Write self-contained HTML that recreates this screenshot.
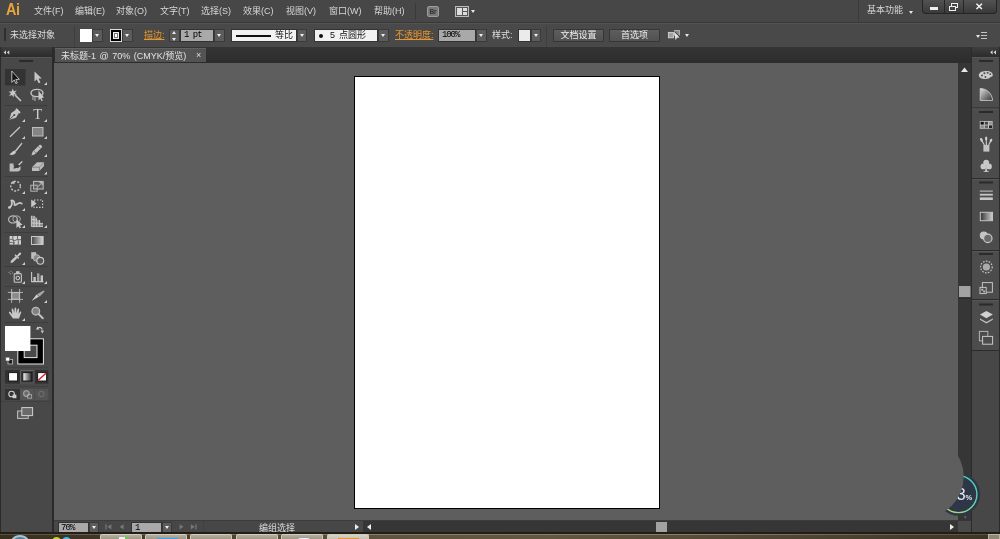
<!DOCTYPE html>
<html>
<head>
<meta charset="utf-8">
<title>Ai</title>
<style>
*{margin:0;padding:0;box-sizing:border-box}
html,body{width:1000px;height:539px;overflow:hidden;background:#5e5e5e}
body{position:relative;font-family:"Liberation Sans","Noto Sans CJK SC",sans-serif;font-size:9px;color:#e0e0e0}
.abs{position:absolute}
#menubar{left:0;top:0;width:1000px;height:23px;background:#474747;border-bottom:1px solid #383838}
#ctrlbar{left:0;top:23px;width:1000px;height:24px;background:#494949;border-top:1px solid #535353}
#tabbar{left:0;top:47px;width:1000px;height:16px;background:linear-gradient(#343434,#2c2c2c)}
#canvas{left:52px;top:63px;width:906px;height:456px;background:#5e5e5e}
#artboard{left:354px;top:76px;width:306px;height:433px;background:#fff;border:1px solid #000}
#lefttool{left:0;top:48px;width:51px;height:471px;background:#474747}
#leftsep{left:51px;top:48px;width:2px;height:471px;background:#2e2e2e}
#vscroll{left:958px;top:63px;width:13px;height:456px;background:#383838}
#rightpanel{left:972px;top:48px;width:28px;height:484px;background:#494949}
.mi{top:5px;height:12px;line-height:12px;white-space:nowrap;color:#d6d6d6;font-size:9px}

#ailogo{left:6px;top:0px;font-size:16px;font-weight:bold;color:#e9a43a;line-height:20px;letter-spacing:-0.5px;transform:scaleX(0.9);transform-origin:0 0}
#bricon{left:427px;top:6px;width:12px;height:11px;background:#7a7a7a;border:1px solid #9c9c9c;border-radius:2px;color:#303030;font-size:6.5px;font-weight:bold;line-height:9px;text-align:center}
#layicon{left:455px;top:6px;width:14px;height:11px;border:1px solid #bbb;background:#555}
#layicon i{position:absolute;left:1px;top:1px;width:5px;height:7px;background:#ddd}
#layicon b{position:absolute;left:7px;top:1px;width:4px;height:3px;background:#ddd}
#layicon u{position:absolute;left:7px;top:5px;width:4px;height:3px;background:#ddd}
.tri{width:0;height:0;border-left:3px solid transparent;border-right:3px solid transparent;border-top:4px solid #e6e6e6}
.tri.s{border-left-width:2px;border-right-width:2px;border-top-width:3px}
.triu{position:absolute;width:0;height:0;border-left:2.5px solid transparent;border-right:2.5px solid transparent;border-bottom:3px solid #e6e6e6}
#winbtns{left:922px;top:0;width:75px;height:14px;background:linear-gradient(#525252,#3a3a3a);border:1px solid #242424;border-top:none;border-radius:0 0 4px 4px}
.wb{position:absolute;top:0;height:14px;background:linear-gradient(#4a4a4a,#333);border:1px solid #222;border-top:none;border-radius:0 0 3px 3px}
.ct{top:5px;line-height:13px;font-size:9px;white-space:nowrap;color:#dedede}
.or{color:#e8962e;text-decoration:underline}
.dd{background:#5c5c5c;border:1px solid #3a3a3a}
.dd:after{content:"";position:absolute;left:50%;top:4px;margin-left:-2.5px;width:0;height:0;border-left:2.5px solid transparent;border-right:2.5px solid transparent;border-top:3px solid #eee}
.inp{background:#a9a9a9;border:1px solid #333;color:#000;font-size:9px;line-height:11px}
.btn{background:linear-gradient(#5e5e5e,#515151);border:1px solid #363636;color:#eee;font-size:9px;line-height:11px;text-align:center;border-radius:1px}
#arricon{left:668px;top:5px;width:14px;height:12px}
#ctrlmenu{left:976px;top:8px;width:12px;height:8px}
#ctrlmenu i{position:absolute;left:5px;width:6px;height:1px;background:#c4c4c4}
#tab{left:55px;top:1px;width:151px;height:14px;background:#535353;color:#e2e2e2;font-size:9px;border-top:1px solid #616161}

#bottombar{left:54px;top:521px;width:904px;height:12px;background:#474747;box-shadow:0 -1px 0 #3c3c3c}
#taskbar{left:0;top:532px;width:1000px;height:7px;background:linear-gradient(90deg,#38301f 0%,#3d3528 9%,#5f543f 38%,#62573f 55%,#4e4535 80%,#3a3428 100%);border-top:2px solid #221e16;overflow:hidden}
.dd.sm:after{top:3px}
.tb{top:0px;width:42px;height:8px;background:linear-gradient(#b3ae9f,#8c8676);border:1px solid #d0cbbb;border-bottom:none;border-radius:2px 2px 0 0}
.tb.act{background:linear-gradient(#d6d2c6,#b9b4a4)}
.tb i{position:absolute;top:2px;height:6px}
#root{position:absolute;left:0;top:0;width:1000px;height:539px;overflow:hidden;will-change:transform}
</style>
</head>
<body>
<div id="root">
<div id="canvas" class="abs"></div>
<div id="artboard" class="abs"></div>

<!-- MENU BAR -->
<div id="menubar" class="abs">
  <div class="abs" id="ailogo">Ai</div>
  <div class="abs mi" style="left:34px">文件(F)</div>
  <div class="abs mi" style="left:75px">编辑(E)</div>
  <div class="abs mi" style="left:116px">对象(O)</div>
  <div class="abs mi" style="left:160px">文字(T)</div>
  <div class="abs mi" style="left:201px">选择(S)</div>
  <div class="abs mi" style="left:243px">效果(C)</div>
  <div class="abs mi" style="left:286px">视图(V)</div>
  <div class="abs mi" style="left:329px">窗口(W)</div>
  <div class="abs mi" style="left:374px">帮助(H)</div>
  <div class="abs" style="left:415px;top:3px;width:1px;height:17px;background:#3a3a3a"></div>
  <div class="abs" id="bricon">Br</div>
  <div class="abs" id="layicon"><i></i><b></b><u></u></div>
  <div class="abs tri" style="left:470.5px;top:9.5px;border-left-width:2.5px;border-right-width:2.5px;border-top-width:3px"></div>
  <div class="abs" style="left:858px;top:0;width:1px;height:22px;background:#3c3c3c"></div>
  <div class="abs mi" style="left:867px;top:4px">基本功能</div>
  <div class="abs tri s" style="left:909px;top:11px"></div>
  <div class="abs" id="winbtns">
    <em class="abs" style="left:21px;top:0;width:1px;height:13px;background:#262626"></em>
    <em class="abs" style="left:40px;top:0;width:1px;height:13px;background:#262626"></em>
    <em class="abs" style="left:7px;top:7px;width:8px;height:2.5px;background:#efefef"></em>
    <em class="abs" style="left:28px;top:3px;width:7px;height:5px;border:1.3px solid #efefef"></em>
    <em class="abs" style="left:25.5px;top:5.5px;width:7px;height:5px;border:1.3px solid #efefef;background:#454545"></em>
    <em class="abs" style="left:52px;top:0px;font-style:normal;font-size:10px;font-weight:bold;color:#efefef;line-height:13px">✕</em>
  </div>
</div>

<!-- CONTROL BAR -->
<div id="ctrlbar" class="abs">
  <div class="abs" style="left:4px;top:4px;width:2px;height:13px;background:#2f2f2f"></div>
  <div class="abs ct" style="left:10px">未选择对象</div>
  <div class="abs" style="left:74px;top:2px;width:1px;height:21px;background:#3e3e3e"></div>
  <div class="abs" style="left:80px;top:5px;width:12px;height:13px;background:#fff"></div>
  <div class="abs dd" style="left:92px;top:5px;width:11px;height:13px"></div>
  <div class="abs" style="left:110px;top:5px;width:12px;height:13px;background:#000;border:1px solid #ddd"><div class="abs" style="left:2px;top:2px;width:6px;height:7px;border:1px solid #eee;background:#777"><div class="abs" style="left:1px;top:1px;width:2px;height:3px;background:#fff"></div></div></div>
  <div class="abs dd" style="left:122px;top:5px;width:11px;height:13px"></div>
  <div class="abs ct or" style="left:144px">描边:</div>
  <div class="abs" style="left:169px;top:5px;width:11px;height:13px;background:#5a5a5a;border:1px solid #3a3a3a"><div class="abs triu" style="left:2px;top:1px"></div><div class="abs tri" style="left:2px;top:8px;border-left-width:2.5px;border-right-width:2.5px;border-top-width:3px"></div></div>
  <div class="abs inp" style="left:180px;top:5px;width:34px;height:13px;font-family:'Liberation Mono',monospace;font-size:9px;letter-spacing:-1px;padding-left:3px;padding-top:0px">1 pt</div>
  <div class="abs dd" style="left:214px;top:5px;width:11px;height:13px"></div>
  <div class="abs" style="left:231px;top:5px;width:66px;height:13px;background:#f2f2f2;border:1px solid #333"><div class="abs" style="left:4px;top:5px;width:35px;height:1.5px;background:#111"></div><div class="abs" style="left:43px;top:0;color:#111;line-height:11px;font-size:9px;white-space:nowrap">等比</div></div>
  <div class="abs dd" style="left:297px;top:5px;width:10px;height:13px"></div>
  <div class="abs" style="left:314px;top:5px;width:64px;height:13px;background:#f2f2f2;border:1px solid #333"><div class="abs" style="left:4px;top:4px;width:4px;height:4px;border-radius:2px;background:#111"></div><div class="abs" style="left:15px;top:0;color:#111;line-height:11px;font-size:9px;white-space:nowrap;word-spacing:1.5px">5 点圆形</div></div>
  <div class="abs dd" style="left:378px;top:5px;width:11px;height:13px"></div>
  <div class="abs ct or" style="left:395px">不透明度:</div>
  <div class="abs inp" style="left:438px;top:5px;width:38px;height:13px;padding-left:3px;font-family:'Liberation Mono',monospace;font-size:9px;letter-spacing:-1.1px;padding-top:0px">100%</div>
  <div class="abs dd" style="left:476px;top:5px;width:11px;height:13px"></div>
  <div class="abs ct" style="left:492px">样式:</div>
  <div class="abs" style="left:518px;top:5px;width:13px;height:13px;background:#ebebeb;border:1px solid #333"></div>
  <div class="abs dd" style="left:531px;top:5px;width:10px;height:13px"></div>
  <div class="abs" style="left:546px;top:2px;width:1px;height:21px;background:#3e3e3e"></div>
  <div class="abs btn" style="left:553px;top:5px;width:51px;height:13px">文档设置</div>
  <div class="abs btn" style="left:609px;top:5px;width:51px;height:13px">首选项</div>
  <svg class="abs" style="left:666px;top:4px" width="18" height="15" viewBox="666 28 18 15"><rect x="668.4" y="32.4" width="5" height="5.4" fill="#a0a0a0" stroke="#d4d4d4" stroke-width="0.9"/><rect x="674.6" y="30.4" width="5" height="4.8" fill="#8a8a8a" stroke="#bdbdbd" stroke-width="0.8"/><path d="M674.2,32 L679.6,37.6 L677,37.8 L675.6,40.2 Z" fill="#e2e2e2"/><path d="M674.6,31.4 L680,37" stroke="#2e2e2e" stroke-width="0.8"/></svg>
  <div class="abs tri" style="left:685px;top:10px;border-left-width:2.5px;border-right-width:2.5px;border-top-width:3.5px"></div>
  <div class="abs" id="ctrlmenu"><div class="abs tri s" style="left:0;top:3px"></div><i style="top:0"></i><i style="top:3px"></i><i style="top:6px"></i></div>
</div>

<!-- TAB BAR -->
<div id="tabbar" class="abs">
  <div class="abs" id="tab"><span class="abs" style="left:6px;top:1px;line-height:12px;white-space:nowrap;word-spacing:1px">未标题-1 @ 70% (CMYK/预览)</span><span class="abs" style="left:141px;top:0px;line-height:13px;font-size:9px;color:#ddd">×</span></div>
</div>

<!-- LEFT TOOLBAR -->
<svg class="abs" style="left:0;top:0" width="54" height="539" viewBox="0 0 54 539">
<defs>
<linearGradient id="hdr" x1="0" y1="0" x2="0" y2="1"><stop offset="0" stop-color="#3e3e3e"/><stop offset="1" stop-color="#2c2c2c"/></linearGradient>
<linearGradient id="g1" x1="0" y1="0" x2="1" y2="0"><stop offset="0" stop-color="#444"/><stop offset="1" stop-color="#d8d8d8"/></linearGradient>
<linearGradient id="g2" x1="0" y1="0" x2="1" y2="0"><stop offset="0" stop-color="#fff"/><stop offset="1" stop-color="#222"/></linearGradient>
</defs>
<!-- panel bg -->
<rect x="0" y="47" width="54" height="485" fill="#2b2b2b"/>
<rect x="1" y="47" width="51" height="10" fill="url(#hdr)"/>
<rect x="1" y="57" width="51" height="475" fill="#484848"/>
<rect x="1" y="57" width="51" height="1" fill="#565656"/>
<!-- collapse arrows -->
<path d="M6,50.2 L6,54.6 L3.6,52.4 Z M9.3,50.2 L9.3,54.6 L6.9,52.4 Z" fill="#d0d0d0"/>
<!-- grip -->
<rect x="19" y="60" width="14" height="2" fill="#2a2a2a"/>
<!-- separators -->
<g fill="#3d3d3d">
<rect x="4" y="105" width="44" height="1"/>
<rect x="4" y="176" width="44" height="1"/>
<rect x="4" y="232" width="44" height="1"/>
<rect x="4" y="266" width="44" height="1"/>
<rect x="4" y="286" width="44" height="1"/>
<rect x="4" y="322" width="44" height="1"/>
<rect x="4" y="367" width="44" height="1" fill="#414141"/>
<rect x="4" y="386" width="44" height="1" fill="#414141"/>
<rect x="1" y="401" width="50" height="1" fill="#404040"/>
</g>
<!-- row1 -->
<rect x="5" y="69" width="20.5" height="16.5" fill="#333"/>
<path d="M11.8,71 L11.8,82.3 L14.3,80 L15.8,83.6 L17.3,83 L15.8,79.5 L19.3,79.3 Z" fill="#151515" stroke="#c9c9c9" stroke-width="0.9" stroke-linejoin="round"/>
<path d="M34.5,71.5 L34.5,81.5 L36.8,79.3 L38.6,83.2 L40.4,82.4 L38.6,78.6 L41.8,78.4 Z" fill="#c6c6c6"/>
<path d="M47,82 L47,85 L44,85 Z" fill="#cfcfcf"/>
<!-- row2 wand -->
<path d="M12.8,88.5 L13.8,91.3 L16.8,90.5 L14.8,92.8 L17,94.8 L14,94.6 L13.4,97.5 L12,94.9 L9,96 L10.9,93.5 L8.6,91.5 L11.6,91.6 Z" fill="#c8c8c8"/>
<path d="M15,95 L21,101" stroke="#c8c8c8" stroke-width="1.6"/>
<!-- lasso -->
<ellipse cx="37" cy="93" rx="6" ry="3.6" fill="none" stroke="#c4c4c4" stroke-width="1.4"/>
<path d="M33,96 L33,100 M35,97 L35,101" stroke="#b8b8b8" stroke-width="1"/>
<path d="M38.5,90.5 L38.5,100.5 L40.3,98.6 L41.6,101.2 L42.8,100.6 L41.6,98 L44,97.6 Z" fill="#c8c8c8"/>
<!-- row3 pen -->
<path d="M9.4,119.8 L11.2,113 L16,109.8 L19,112.8 L16,117.8 Z" fill="#c4c4c4"/>
<path d="M9.8,119.4 L14,115.2" stroke="#444" stroke-width="0.9"/>
<circle cx="14.3" cy="114.9" r="1" fill="#444"/>
<path d="M16.6,108.3 L20.6,112.2 L19.4,113.4 L15.4,109.5 Z" fill="#d0d0d0"/>
<path d="M25,119 L25,122 L22,122 Z" fill="#cfcfcf"/>
<text x="37.8" y="119" font-family="Liberation Serif, serif" font-size="14.5" fill="#cdcdcd" text-anchor="middle">T</text>
<path d="M47,119 L47,122 L44,122 Z" fill="#cfcfcf"/>
<!-- row4 line / rect -->
<path d="M10,136.8 L20,127" stroke="#c8c8c8" stroke-width="1.2"/>
<path d="M25,136 L25,139 L22,139 Z" fill="#cfcfcf"/>
<rect x="32.5" y="127.5" width="10.5" height="8.5" fill="#858585" stroke="#bdbdbd" stroke-width="1"/>
<path d="M47,136 L47,139 L44,139 Z" fill="#cfcfcf"/>
<!-- row5 brush / pencil -->
<path d="M21.6,143.6 L15.6,151" stroke="#c6c6c6" stroke-width="1.5" stroke-linecap="round"/>
<path d="M9.2,154.2 C11,153.6 12,151.4 14.6,150.6 L16,152.2 C15,154.8 11.5,155.6 9.2,154.2 Z" fill="#c8c8c8"/>
<path d="M31.4,155.4 L32.6,151.8 L39.4,145 C40.6,144 42.8,146 41.8,147.4 L35,154.2 Z" fill="#c2c2c2"/>
<path d="M33.8,151 L36,153.2" stroke="#666" stroke-width="0.8"/>
<path d="M38.2,146.2 L40.6,148.6" stroke="#7a7a7a" stroke-width="0.8"/>
<path d="M47,154 L47,157 L44,157 Z" fill="#cfcfcf"/>
<!-- row6 blob brush / eraser -->
<path d="M9.6,163.4 L13.5,163.4 L13.5,166 L18,168.2 L20.5,166 L20.5,170 L18.2,171.6 L9.6,171.6 Z" fill="#bcbcbc"/>
<path d="M13.2,168.2 C14.5,165.2 17.5,164.4 19.4,164.6 C18.8,167 16.2,169 13.2,168.2 Z" fill="#3a3a3a"/>
<path d="M18.6,165 L22.4,161.4" stroke="#d2d2d2" stroke-width="1.3"/>
<path d="M32,167.2 L37,162.2 L44,162.2 L44,166 L39.4,171 L32,171 Z" fill="#bdbdbd"/>
<path d="M32,167.2 L39.4,167.2 L44,162.4 M39.4,167.2 L39.4,171" stroke="#777" stroke-width="0.8" fill="none"/>
<path d="M47,171.5 L47,174.5 L44,174.5 Z" fill="#cfcfcf"/>
<!-- row7 rotate / scale -->
<circle cx="15.6" cy="186.2" r="4.8" fill="none" stroke="#c2c2c2" stroke-width="1.4" stroke-dasharray="2 1.4"/>
<path d="M11.2,182.2 L14.8,180.6 L14.4,184.2 Z" fill="#c8c8c8"/>
<path d="M25,191 L25,194 L22,194 Z" fill="#cfcfcf"/>
<rect x="33.6" y="181.4" width="9.6" height="7.6" fill="#5a5a5a" stroke="#c0c0c0" stroke-width="1"/>
<path d="M38,186.6 L42,182.6 M39.4,182.4 L42.2,182.4 L42.2,185.2" stroke="#c8c8c8" stroke-width="1" fill="none"/>
<rect x="30.8" y="185.2" width="6.4" height="6" fill="none" stroke="#b4b4b4" stroke-width="1"/>
<path d="M47,191 L47,194 L44,194 Z" fill="#cfcfcf"/>
<!-- row8 warp / free transform -->
<path d="M9,207.6 C12,207 12.4,203 11.4,200.6 C13.4,199.4 15,202.6 14.4,205 C16,206.6 18.4,200.6 21.8,203.6" fill="none" stroke="#c6c6c6" stroke-width="1.7" stroke-linecap="round"/>
<circle cx="9.6" cy="207.4" r="1.3" fill="#c8c8c8"/>
<path d="M25,208 L25,211 L22,211 Z" fill="#cfcfcf"/>
<rect x="34" y="200" width="8.6" height="7.4" fill="none" stroke="#c4c4c4" stroke-width="1.2" stroke-dasharray="1.6 1.4"/>
<path d="M31.2,199.4 L31.2,207.4 L36.6,203.4 Z" fill="#c8c8c8"/>
<!-- row9 shape builder / perspective -->
<ellipse cx="13" cy="219.4" rx="4.4" ry="3.6" fill="none" stroke="#bcbcbc" stroke-width="1.2"/>
<ellipse cx="16.6" cy="219" rx="3.8" ry="3.2" fill="none" stroke="#a8a8a8" stroke-width="1"/>
<path d="M16.4,219.6 L16.4,228 L18.4,226.2 L19.8,228.4 L21,227.6 L19.8,225.4 L22.6,224.8 Z" fill="#c8c8c8"/>
<path d="M25,225 L25,228 L22,228 Z" fill="#cfcfcf"/>
<path d="M31.4,215.8 L31.4,226.6 L43,226.6 L43,223.4 L40,223.4 L40,220 L36.4,220 L36.4,217.4 L34,215.8 Z" fill="#8e8e8e"/>
<path d="M31.4,215.8 L31.4,226.6 L43,226.6 M34,216 L34,226.6 M36.6,218 L36.6,226.6 M39.6,220 L39.6,226.6 M31.4,219.4 L36.6,220 M31.4,223 L43,223.4" stroke="#d0d0d0" stroke-width="0.9" fill="none"/>
<path d="M47,225 L47,228 L44,228 Z" fill="#cfcfcf"/>
<!-- row10 mesh / gradient -->
<rect x="9.6" y="236" width="11.4" height="8.6" fill="#cfcfcf"/>
<path d="M9.6,240 C12,238 14,242 16,240 C18,238.4 19.6,240.4 21,239.6 M13,236 C11.6,239 15,241 13.6,244.6 M17.6,236 C16.6,239 19.6,241 18,244.6 M9.6,242.6 C12,241.6 13,243.6 15,243" fill="none" stroke="#444" stroke-width="0.75"/>
<rect x="31.5" y="236.5" width="11.6" height="8" fill="url(#g1)" stroke="#c6c6c6" stroke-width="1"/>
<!-- row11 eyedropper / blend -->
<path d="M10.6,263 L11,260.8 L15.6,256.2 L17.4,258 L12.8,262.6 Z" fill="#c8c8c8"/>
<path d="M15,254.8 L18.8,258.6" stroke="#c8c8c8" stroke-width="1.4"/>
<path d="M16.8,256 L19.4,252.8 C20.4,252 21.6,253.2 20.8,254.2 L17.8,257 Z" fill="#d0d0d0"/>
<path d="M25,262 L25,265 L22,265 Z" fill="#cfcfcf"/>
<rect x="31.2" y="252.2" width="5" height="6.6" fill="#bebebe"/>
<circle cx="36.6" cy="258" r="3.3" fill="#868686" stroke="#bcbcbc" stroke-width="0.9"/>
<circle cx="40.3" cy="260.8" r="3.4" fill="#565656" stroke="#cacaca" stroke-width="1.1"/>
<!-- row12 sprayer / graph -->
<rect x="14.2" y="273.6" width="7.2" height="8.6" rx="1" fill="#4c4c4c" stroke="#c4c4c4" stroke-width="1.1"/>
<rect x="16" y="271.2" width="3.6" height="2.2" fill="#c4c4c4"/>
<circle cx="17.8" cy="278" r="1.8" fill="none" stroke="#d4d4d4" stroke-width="1"/>
<g fill="#8a8a8a"><circle cx="9" cy="272.4" r="0.7"/><circle cx="11" cy="271.4" r="0.7"/><circle cx="12.6" cy="273" r="0.7"/><circle cx="10.4" cy="273.8" r="0.7"/></g>
<path d="M25,281 L25,284 L22,284 Z" fill="#cfcfcf"/>
<path d="M31.6,272 L31.6,281.6 L43.4,281.6" fill="none" stroke="#c8c8c8" stroke-width="1.1"/>
<rect x="33.4" y="277" width="2.4" height="4.2" fill="#c6c6c6"/>
<rect x="37" y="273.4" width="2.4" height="7.8" fill="#a0a0a0"/>
<rect x="40.6" y="275.4" width="2.4" height="5.8" fill="#c6c6c6"/>
<path d="M47,281 L47,284 L44,284 Z" fill="#cfcfcf"/>
<!-- row13 artboard / slice -->
<rect x="11.8" y="292.6" width="7.6" height="6.6" fill="#8a8a8a" stroke="#c4c4c4" stroke-width="1"/>
<path d="M7.8,292.4 L23,292.4 M7.8,299.4 L23,299.4 M11.6,289 L11.6,302.8 M19.6,289 L19.6,302.8" stroke="#bcbcbc" stroke-width="0.9"/>
<path d="M31.6,301 L36.6,294.6 L39,296.6 Z" fill="#d2d2d2"/>
<path d="M37,294.2 L43.6,290.4 L44.6,291.4 L39.6,296.4 Z" fill="#a8a8a8"/>
<path d="M47,300 L47,303 L44,303 Z" fill="#cfcfcf"/>
<!-- row14 hand / zoom -->
<path d="M13,318.6 L9,313 C8.6,311.8 10,311.4 10.8,312.4 L12.4,314.4 L11.6,309.4 C11.6,308.2 13,308.2 13.3,309.2 L14.2,313 L14.6,308.2 C14.8,307.2 16.2,307.2 16.2,308.4 L16.4,313 L17.6,309 C18,308 19.2,308.4 19.1,309.4 L18.6,314 L20,311.8 C20.6,311 21.6,311.6 21.2,312.6 L19,318.6 Z" fill="#c8c8c8"/>
<path d="M25,318 L25,321 L22,321 Z" fill="#cfcfcf"/>
<circle cx="35.8" cy="311.2" r="3.8" fill="#828282" stroke="#bcbcbc" stroke-width="1.3"/>
<path d="M38.6,314 L42.8,318.2" stroke="#c0c0c0" stroke-width="2" stroke-linecap="round"/>
<!-- fill / stroke -->
<rect x="17.8" y="338.8" width="25.6" height="25.2" fill="#000" stroke="#e6e6e6" stroke-width="1"/>
<rect x="24.2" y="345.2" width="12.8" height="12.4" fill="#4a4a4a" stroke="#e6e6e6" stroke-width="1"/>
<rect x="5" y="326" width="25.4" height="25" fill="#fff"/>
<path d="M37.4,329.2 C37.8,327 41,326.6 42.4,329.4" fill="none" stroke="#c8c8c8" stroke-width="1.2"/>
<path d="M36,329.4 L39.4,329.4 L37.6,326.6 Z M40.6,330.6 L44,330.6 L42.3,333.4 Z" fill="#c8c8c8"/>
<rect x="8" y="359.4" width="4.6" height="4.6" fill="#1c1c1c" stroke="#b4b4b4" stroke-width="0.9"/>
<rect x="5.8" y="357.2" width="3.8" height="3.8" fill="#fff" stroke="#555" stroke-width="0.6"/>
<!-- colour mode strip -->
<rect x="5" y="370" width="43.4" height="13.6" fill="#323232"/>
<rect x="20.6" y="370.6" width="13.4" height="12.4" fill="#3a3a3a" stroke="#6e6e6e" stroke-width="0.8"/>
<rect x="8.6" y="372.6" width="9" height="8.4" fill="#fff" stroke="#1a1a1a" stroke-width="1"/>
<rect x="22.8" y="372.6" width="9" height="8.4" fill="url(#g2)" stroke="#1a1a1a" stroke-width="1"/>
<rect x="37.6" y="372.6" width="9" height="8.4" fill="#fff" stroke="#1a1a1a" stroke-width="1"/>
<path d="M38,380.6 L46.2,373" stroke="#d0202a" stroke-width="1.4"/>
<!-- draw modes -->
<rect x="5" y="389" width="15" height="11" fill="#333"/>
<rect x="20" y="389" width="14" height="11" fill="#565656"/>
<rect x="34.6" y="389" width="13.8" height="11" fill="#545454"/>
<circle cx="11.6" cy="394" r="2.8" fill="none" stroke="#cfcfcf" stroke-width="1.1"/>
<rect x="12.6" y="394.6" width="3.8" height="3.6" fill="#cfcfcf"/>
<circle cx="26.4" cy="393.6" r="2.8" fill="#6a6a6a" stroke="#a8a8a8" stroke-width="1.1"/>
<rect x="27.6" y="394.6" width="3.8" height="3.6" fill="none" stroke="#a8a8a8" stroke-width="0.9"/>
<circle cx="41.4" cy="394" r="2.6" fill="none" stroke="#6c6c6c" stroke-width="1.1"/>
<!-- screen mode -->
<rect x="17.6" y="411" width="10.6" height="7.4" fill="#5a5a5a" stroke="#c2c2c2" stroke-width="1"/>
<rect x="21.8" y="407.6" width="10.8" height="8" fill="#6a6a6a" stroke="#d0d0d0" stroke-width="1"/>
</svg>

<!-- RIGHT PANEL -->
<svg class="abs" style="left:940px;top:47px" width="60" height="486" viewBox="940 47 60 486">
<defs>
<linearGradient id="rg1" x1="0" y1="0" x2="1" y2="0"><stop offset="0" stop-color="#333"/><stop offset="1" stop-color="#d0d0d0"/></linearGradient>
<linearGradient id="rg2" x1="0" y1="0" x2="1" y2="1"><stop offset="0" stop-color="#e0e0e0"/><stop offset="1" stop-color="#303030"/></linearGradient>
<linearGradient id="ring" x1="1" y1="0" x2="0" y2="1"><stop offset="0" stop-color="#35d0c8"/><stop offset="0.5" stop-color="#6fd8a0"/><stop offset="1" stop-color="#c8dc58"/></linearGradient>
<clipPath id="clipR"><rect x="958" y="47" width="42" height="486"/></clipPath>
</defs>
<!-- vertical scrollbar -->
<rect x="958" y="63" width="13" height="458" fill="#363636"/>
<path d="M961,72 L964.5,67.4 L968,72 Z" fill="#e8e8e8"/>
<rect x="959" y="286" width="11.5" height="11" fill="#a2a2a2"/>
<rect x="958" y="298" width="13" height="1" fill="#2c2c2c"/>
<!-- right panel -->
<rect x="971" y="47" width="29" height="486" fill="#2b2b2b"/>
<rect x="972" y="47" width="27" height="10" fill="url(#hdr)"/>
<rect x="972" y="57" width="27" height="293" fill="#4c4c4c"/>
<rect x="972" y="351" width="27" height="182" fill="#474747"/>
<path d="M992.6,50.2 L992.6,54.4 L990.2,52.3 Z M996,50.2 L996,54.4 L993.6,52.3 Z" fill="#d8d8d8"/>
<!-- group separators & grips -->
<g fill="#2b2b2b">
<rect x="972" y="107.5" width="28" height="1"/>
<rect x="972" y="178" width="28" height="1"/>
<rect x="972" y="250" width="28" height="1"/>
<rect x="972" y="299" width="28" height="1"/>
<rect x="972" y="350" width="28" height="1"/>
<rect x="979" y="60" width="14" height="2"/>
<rect x="979" y="111" width="14" height="2"/>
<rect x="979" y="181.5" width="14" height="2"/>
<rect x="979" y="253" width="14" height="2"/>
<rect x="979" y="303.5" width="14" height="2"/>
</g>
<g fill="#575757">
<rect x="972" y="57" width="27" height="1"/>
<rect x="972" y="108.5" width="27" height="1"/>
<rect x="972" y="179" width="27" height="1"/>
<rect x="972" y="251" width="27" height="1"/>
<rect x="972" y="300" width="27" height="1"/>
</g>
<!-- palette -->
<path d="M985.6,71 C989.8,70.6 993,72.6 992.8,75.2 C992.6,77 990.6,76.6 989.8,77.6 C989.2,78.6 988,79 985.4,79 C981.6,79 978.8,77.4 978.8,75.2 C978.8,73 981.6,71.2 985.6,71 Z" fill="#cdcdcd"/>
<g fill="#4a4a4a"><circle cx="982" cy="75.4" r="1"/><circle cx="984.4" cy="73.2" r="1"/><circle cx="987.6" cy="72.8" r="1"/><circle cx="990.2" cy="74.2" r="0.9"/><circle cx="985.4" cy="77" r="0.9"/></g>
<!-- colour guide -->
<path d="M980.2,88.4 C987,88.8 992,93.4 992.6,100.4 L980.2,100.4 Z" fill="url(#rg2)" stroke="#c8c8c8" stroke-width="0.9"/>
<!-- swatches -->
<rect x="979.8" y="121" width="12.8" height="7.8" fill="#c4c4c4"/>
<g><rect x="980.6" y="121.8" width="3.2" height="2.8" fill="#111"/><rect x="984.8" y="121.8" width="3.2" height="2.8" fill="#444"/><rect x="989" y="121.8" width="3" height="2.8" fill="#999"/><rect x="980.6" y="125.4" width="3.2" height="2.8" fill="#888"/><rect x="984.8" y="125.4" width="3.2" height="2.8" fill="#666"/><rect x="989" y="125.4" width="3" height="2.8" fill="#222"/></g>
<!-- brushes -->
<rect x="983.4" y="145" width="6" height="6.6" fill="#c2c2c2"/>
<path d="M984.4,145 L981.6,140.4 M986.4,145 L986.2,138 M988.6,145 L991,140.6" stroke="#c8c8c8" stroke-width="1.2"/>
<ellipse cx="981.4" cy="139.8" rx="1.2" ry="2" fill="#d2d2d2" transform="rotate(-25 981.4 139.8)"/>
<ellipse cx="986.2" cy="138.6" rx="1.1" ry="2" fill="#d2d2d2"/>
<ellipse cx="991" cy="140.4" rx="1.1" ry="1.8" fill="#d2d2d2" transform="rotate(30 991 140.4)"/>
<!-- symbols (club) -->
<circle cx="986.2" cy="162.6" r="2.9" fill="#c8c8c8"/>
<circle cx="983.4" cy="166.4" r="2.9" fill="#c8c8c8"/>
<circle cx="989" cy="166.4" r="2.9" fill="#c8c8c8"/>
<path d="M986.2,165 L987.4,171.4 L985,171.4 Z M983.6,171.2 L988.8,171.2 L988.8,172 L983.6,172 Z" fill="#c8c8c8"/>
<!-- stroke -->
<rect x="979.8" y="190.6" width="13" height="1" fill="#c6c6c6"/>
<rect x="979.8" y="193.8" width="13" height="1.8" fill="#c6c6c6"/>
<rect x="979.8" y="197.4" width="13" height="2.6" fill="#c6c6c6"/>
<!-- gradient -->
<rect x="980.3" y="212.3" width="12.2" height="8.4" fill="url(#rg1)" stroke="#c4c4c4" stroke-width="1"/>
<!-- transparency -->
<circle cx="983.8" cy="235.6" r="4" fill="#c4c4c4"/>
<circle cx="987.8" cy="238.4" r="4.2" fill="#6a6a6a" stroke="#c8c8c8" stroke-width="1.2"/>
<!-- appearance -->
<circle cx="986.4" cy="267" r="5.8" fill="none" stroke="#c4c4c4" stroke-width="1.2" stroke-dasharray="1.6 1.3"/>
<circle cx="986.4" cy="267" r="3.6" fill="#ababab"/>
<!-- graphic styles -->
<rect x="982.4" y="282.6" width="10" height="9.6" fill="none" stroke="#c2c2c2" stroke-width="1"/>
<rect x="980" y="287.4" width="6.2" height="6.2" fill="#4c4c4c" stroke="#c2c2c2" stroke-width="1"/>
<rect x="981.4" y="288.8" width="1.8" height="1.8" fill="#c2c2c2"/><rect x="983.2" y="290.6" width="1.8" height="1.8" fill="#c2c2c2"/>
<!-- layers -->
<path d="M986.4,311 L992.8,314.6 L986.4,318.2 L980,314.6 Z" fill="#d2d2d2"/>
<path d="M980,318.4 L986.4,322 L992.8,318.4 L992.8,319.8 L986.4,323.4 L980,319.8 Z" fill="#c4c4c4"/>
<!-- artboards -->
<rect x="979.4" y="331.4" width="8.4" height="9.4" fill="none" stroke="#b4b4b4" stroke-width="1"/>
<rect x="982.6" y="336.4" width="10" height="7.8" fill="#4c4c4c" stroke="#c8c8c8" stroke-width="1"/>
<!-- scroll corner -->
<rect x="958" y="521" width="13" height="12" fill="#4a4a4a"/>
<!-- 3% widget -->
<g>
<circle cx="958.5" cy="494.2" r="21.6" fill="#2f3647"/>
<circle cx="958.5" cy="494.2" r="18.4" fill="none" stroke="url(#ring)" stroke-width="1.4"/>
<text x="956.6" y="500" font-family="Liberation Sans, sans-serif" font-size="16.5" fill="#e6e8f0">3</text>
<text x="965.6" y="500" font-family="Liberation Sans, sans-serif" font-size="7.5" font-weight="bold" fill="#e6e8f0">%</text>
<path d="M964,516.4 L966.4,516.4 L965.2,518.6 Z" fill="#7a7f90"/>
</g>
</svg>
<svg class="abs" style="left:870px;top:420px" width="102" height="100" viewBox="870 420 102 100">
<clipPath id="clipB"><rect x="958" y="420" width="42" height="100"/></clipPath>
<circle cx="922" cy="476.6" r="41.7" fill="#5e5e5e"/>
</svg>

<!-- BOTTOM BAR -->
<div id="bottombar" class="abs">
  <div class="abs inp" style="left:4px;top:1px;width:31px;height:11px;font-family:'Liberation Mono',monospace;font-size:9px;line-height:9px;padding-left:2px;padding-top:1px;letter-spacing:-0.9px">70%</div>
  <div class="abs dd sm" style="left:35px;top:1px;width:10px;height:11px"></div>
  <svg class="abs" style="left:48px;top:0" width="100" height="12" viewBox="102 521 100 12"><g fill="#777"><rect x="105.4" y="524.2" width="1.2" height="5.2"/><path d="M111.4,524.2 L111.4,529.4 L107.4,526.8 Z"/><path d="M123.6,524.2 L123.6,529.4 L119.6,526.8 Z"/><path d="M179.6,524.2 L179.6,529.4 L183.6,526.8 Z"/><path d="M190.8,524.2 L190.8,529.4 L194.8,526.8 Z"/><rect x="195.4" y="524.2" width="1.2" height="5.2"/></g></svg>
  <div class="abs inp" style="left:77px;top:1px;width:31px;height:11px;font-family:'Liberation Mono',monospace;font-size:9px;line-height:9px;padding-left:3px;padding-top:1px">1</div>
  <div class="abs dd sm" style="left:108px;top:1px;width:10px;height:11px"></div>
  <div class="abs" style="left:149px;top:0;width:1px;height:12px;background:#404040"></div>
  <div class="abs" style="left:205px;top:1px;width:37px;line-height:12px;font-size:9px;color:#dcdcdc;white-space:nowrap">编组选择</div>
  <div class="abs" style="left:301px;top:3px;width:0;height:0;border-top:3px solid transparent;border-bottom:3px solid transparent;border-left:4px solid #eee"></div>
  <div class="abs" style="left:309px;top:0;width:595px;height:12px;background:#363636"></div>
  <div class="abs" style="left:313px;top:3px;width:0;height:0;border-top:3px solid transparent;border-bottom:3px solid transparent;border-right:4px solid #eee"></div>
  <div class="abs" style="left:602px;top:1px;width:11px;height:10px;background:#a2a2a2"></div>
  <div class="abs" style="left:896px;top:3px;width:0;height:0;border-top:3px solid transparent;border-bottom:3px solid transparent;border-left:4px solid #eee"></div>
</div>
<!-- TASKBAR -->
<div id="taskbar" class="abs">
  <div class="abs" style="left:0;top:0px;width:1000px;height:1px;background:linear-gradient(90deg,#5a503c,#8a7e66 30%,#8a7e66 70%,#5a503c)"></div>
  <div class="abs" style="left:9px;top:1px;width:22px;height:22px;border-radius:11px;border:2px solid #a9c3cf;background:#4f7f9a"></div>
  <div class="abs" style="left:52px;top:2.5px;width:9px;height:9px;border-radius:5px;background:#b8d820"></div>
  <div class="abs" style="left:62px;top:2.5px;width:9px;height:9px;border-radius:5px;background:#48b8e0"></div>
  <div class="abs tb" style="left:100px"><i style="left:18px;width:7px;background:#eee"></i><i style="left:24px;width:3px;background:#6c4"></i></div>
  <div class="abs tb" style="left:145px"><i style="left:11px;width:21px;background:#3f9fe0;top:3px"></i></div>
  <div class="abs tb" style="left:190px"><i style="left:11px;width:20px;background:#d8d0a0;top:4px"></i></div>
  <div class="abs tb" style="left:236px"><i style="left:10px;width:4px;background:#3f8fe0;top:4px"></i><i style="left:27px;width:4px;background:#3f8fe0;top:4px"></i></div>
  <div class="abs tb" style="left:281px"><i style="left:15px;width:14px;background:#eef;top:3px;border-radius:4px 4px 0 0"></i><i style="left:19px;width:2px;background:#39c;top:4px"></i><i style="left:24px;width:2px;background:#39c;top:4px"></i></div>
  <div class="abs tb act" style="left:327px"><i style="left:10px;width:21px;background:#3a2a10;top:3px;border:1px solid #e89830;border-bottom:none"></i></div>
  <div class="abs" style="left:988px;top:0px;width:12px;height:6px;background:#8d8878;border:1px solid #bbb5a2"></div>
</div>
</div>
</body>
</html>
